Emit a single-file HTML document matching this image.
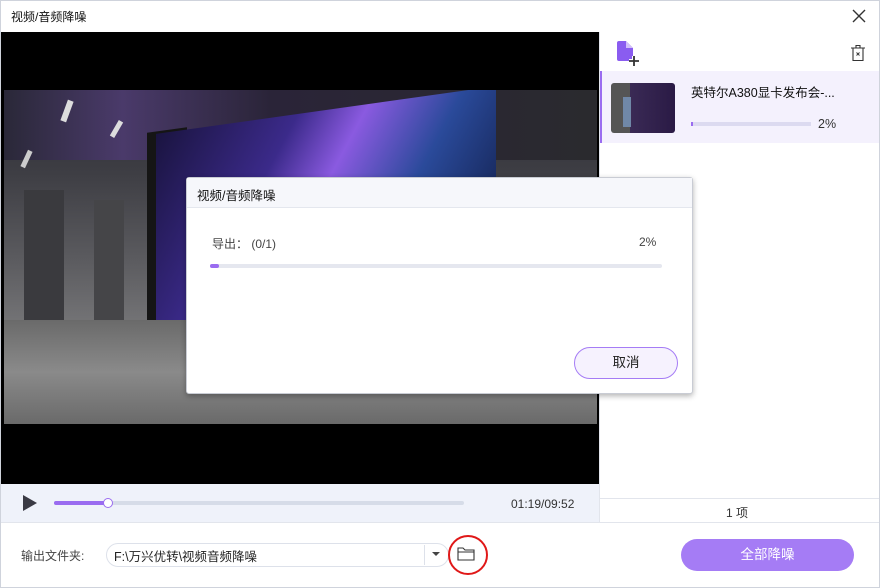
<!DOCTYPE html>
<html><head><meta charset="utf-8"><style>
*{margin:0;padding:0;box-sizing:border-box}
body{width:880px;height:588px;overflow:hidden;background:#fff;font-family:"Liberation Sans","Noto Sans CJK SC",sans-serif;font-size:12px;color:#222;position:relative}
.abs{position:absolute}
</style></head><body>
<div class="abs" style="left:0;top:0;width:880px;height:588px;border:1px solid #cfd3dc"></div>
<div class="abs" style="left:11px;top:8px;font-size:12px;color:#111">视频/音频降噪</div>
<svg class="abs" style="left:852px;top:9px" width="14" height="14"><path d="M1 1L13 13M13 1L1 13" stroke="#333" stroke-width="1.4"/></svg>
<!-- video -->
<div class="abs" style="left:1px;top:32px;width:598px;height:452px;background:#000"></div>
<div class="abs" style="left:4px;top:90px;width:593px;height:334px;background:linear-gradient(180deg,#2a2a33 0%,#3e3e44 25%,#5a5a5e 50%,#7a7a7c 75%,#5e5e60 100%);overflow:hidden">
  <div class="abs" style="left:0;top:0;width:593px;height:70px;background:linear-gradient(90deg,#2a2838,#4a3a6a 20%,#2a2438 45%,#2a2a2e)"></div>
  <div class="abs" style="left:60px;top:10px;width:6px;height:22px;background:#ddd;transform:rotate(20deg)"></div>
  <div class="abs" style="left:20px;top:60px;width:5px;height:18px;background:#ccc;transform:rotate(25deg)"></div>
  <div class="abs" style="left:110px;top:30px;width:5px;height:18px;background:#ddd;transform:rotate(30deg)"></div>
  <div class="abs" style="left:20px;top:100px;width:40px;height:140px;background:#3a3a3e"></div>
  <div class="abs" style="left:90px;top:110px;width:30px;height:120px;background:#454548"></div>
  <div class="abs" style="left:143px;top:40px;width:40px;height:220px;background:#151515;transform:skewY(-8deg)"></div>
  <div class="abs" style="left:152px;top:20px;width:340px;height:230px;background:linear-gradient(120deg,#1a1440,#3b2a8a 30%,#8a5ae0 45%,#2a4a9a 65%,#0a1030);transform:skewY(-8deg)"></div>
  <div class="abs" style="left:0;top:230px;width:593px;height:104px;background:linear-gradient(180deg,#6a6a6a,#8a8a8a 50%,#6a6a6a)"></div>
</div>
<!-- controls -->
<div class="abs" style="left:1px;top:484px;width:598px;height:38px;background:#eff2fa"></div>
<svg class="abs" style="left:23px;top:495px" width="14" height="16"><path d="M0 0L14 8L0 16Z" fill="#3a3a44"/></svg>
<div class="abs" style="left:54px;top:501px;width:410px;height:4px;border-radius:2px;background:#d6dce8"></div>
<div class="abs" style="left:54px;top:501px;width:54px;height:4px;border-radius:2px;background:#9a6cf0"></div>
<div class="abs" style="left:103px;top:498px;width:10px;height:10px;border-radius:50%;background:#fff;border:1.5px solid #9a6cf0"></div>
<div class="abs" style="left:511px;top:497px;font-size:12px;color:#333">01:19/09:52</div>
<!-- right panel -->
<div class="abs" style="left:599px;top:32px;width:1px;height:490px;background:#e2e5ec"></div>
<svg class="abs" style="left:615px;top:40px" width="28" height="26"><path d="M2 3Q2 1 4 1H11L18 8V19Q18 21 16 21H4Q2 21 2 19Z" fill="#8a5cf0"/><path d="M11 1V8H18" fill="#d2c0fa"/><path d="M8 8V16H14" fill="none" stroke="#fff" stroke-width="0"/><path d="M19 16V26M14 21H24" stroke="#fff" stroke-width="4"/><path d="M19 16V26M14 21H24" stroke="#333" stroke-width="1.8"/></svg>
<svg class="abs" style="left:850px;top:44px" width="16" height="18"><path d="M1 4H15M6 4V1.5H10V4M3 4V16.5H13V4" fill="none" stroke="#333" stroke-width="1.1"/><path d="M6.5 8.5L9.5 11.5M9.5 8.5L6.5 11.5" stroke="#333" stroke-width="0.9"/></svg>
<div class="abs" style="left:600px;top:71px;width:279px;height:72px;background:#f4f1fd;border-left:2px solid #9a6cf0"></div>
<div class="abs" style="left:611px;top:83px;width:64px;height:50px;border-radius:3px;background:linear-gradient(90deg,#555 0 30%,#3a2a55 30%,#2a1a45 100%);overflow:hidden"><div style="position:absolute;left:12px;top:14px;width:8px;height:30px;background:#7088a8"></div></div>
<div class="abs" style="left:691px;top:82px;font-size:12.5px;color:#111">英特尔A380显卡发布会-...</div>
<div class="abs" style="left:691px;top:122px;width:120px;height:4px;background:#dcdaf0"></div>
<div class="abs" style="left:691px;top:122px;width:2px;height:4px;background:#9a6cf0"></div>
<div class="abs" style="left:818px;top:117px;font-size:12.5px;color:#333">2%</div>
<div class="abs" style="left:600px;top:498px;width:279px;height:1px;background:#e2e5ec"></div>
<div class="abs" style="left:726px;top:504px;font-size:12px;color:#333">1 项</div>
<!-- bottom -->
<div class="abs" style="left:1px;top:522px;width:878px;height:1px;background:#e2e5ec"></div>
<div class="abs" style="left:21px;top:547px;font-size:12px;color:#444">输出文件夹:</div>
<div class="abs" style="left:106px;top:543px;width:343px;height:24px;border:1px solid #dde1ea;border-radius:12px"></div>
<div class="abs" style="left:424px;top:545px;width:1px;height:20px;background:#dde1ea"></div>
<div class="abs" style="left:114px;top:546px;font-size:12.5px;color:#222">F:\万兴优转\视频音频降噪</div>
<svg class="abs" style="left:431px;top:551px" width="10" height="6"><path d="M1 1L5 5L9 1Z" fill="#444"/></svg>
<svg class="abs" style="left:457px;top:546px" width="18" height="15"><path d="M1 2H6L8 4H17V14H1Z" fill="none" stroke="#333" stroke-width="1.1"/><path d="M1 6H17" stroke="#333" stroke-width="1"/></svg>
<div class="abs" style="left:448px;top:535px;width:40px;height:40px;border-radius:50%;border:2px solid #e01818"></div>
<div class="abs" style="left:681px;top:539px;width:173px;height:32px;border-radius:16px;background:#a57cf5;color:#fff;font-size:13.5px;text-align:center;line-height:32px">全部降噪</div>
<!-- dialog -->
<div class="abs" style="left:186px;top:177px;width:507px;height:217px;background:#fff;border:1px solid #c9ccd4;border-radius:3px;box-shadow:0 2px 6px rgba(0,0,0,.3)"></div>
<div class="abs" style="left:187px;top:178px;width:505px;height:30px;background:#f6f7fb;border-bottom:1px solid #e4e7ee"></div>
<div class="abs" style="left:197px;top:185px;font-size:12.5px;color:#111">视频/音频降噪</div>
<div class="abs" style="left:212px;top:235px;font-size:12px;color:#444">导出： (0/1)</div>
<div class="abs" style="left:639px;top:235px;font-size:12px;color:#444">2%</div>
<div class="abs" style="left:210px;top:264px;width:452px;height:4px;border-radius:2px;background:#e5e7ef"></div>
<div class="abs" style="left:210px;top:264px;width:9px;height:4px;border-radius:2px;background:#9a6cf0"></div>
<div class="abs" style="left:574px;top:347px;width:104px;height:32px;border-radius:16px;border:1px solid #a57cf5;background:#f6f2fe;font-size:13.5px;text-align:center;line-height:30px;color:#222">取消</div>
</body></html>
